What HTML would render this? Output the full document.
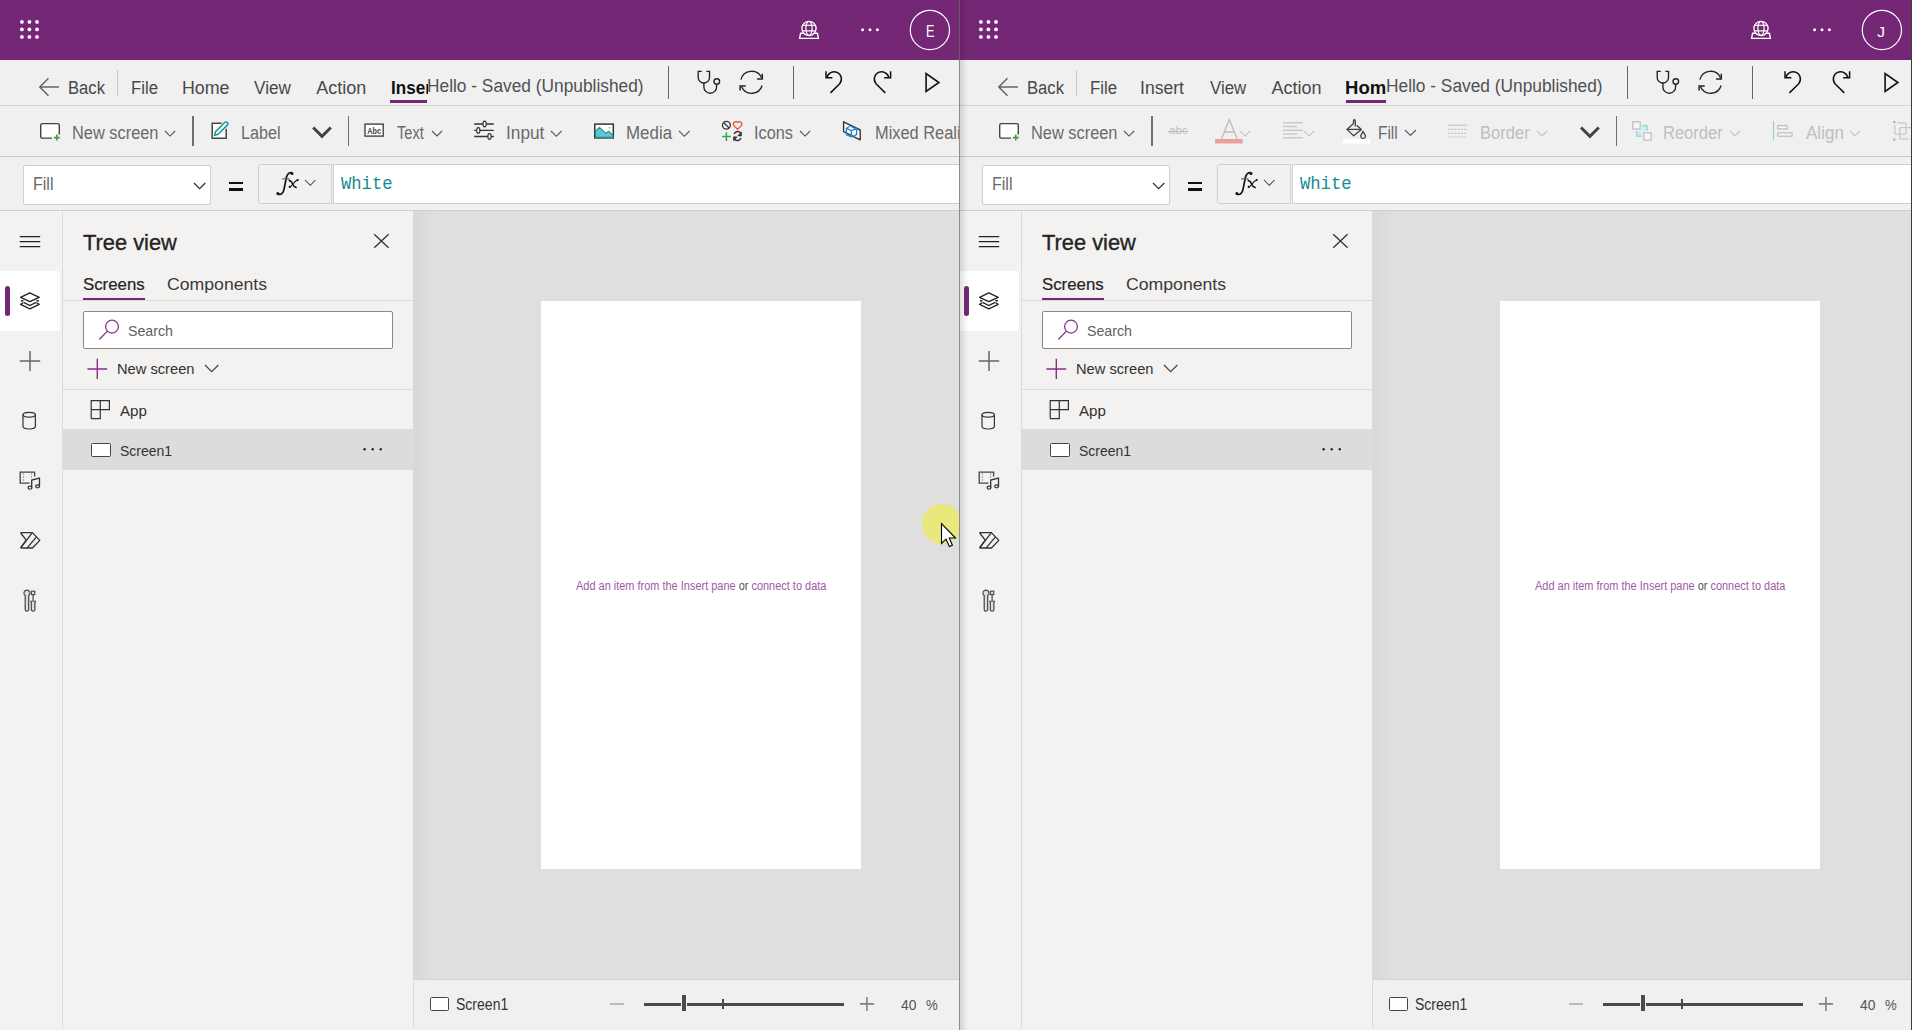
<!DOCTYPE html><html><head><meta charset="utf-8"><style>html,body{margin:0;padding:0;width:1912px;height:1030px;overflow:hidden;background:#f0f0f0}.a{position:absolute;display:block}.t{position:absolute;white-space:nowrap;line-height:1}.w{position:absolute;left:0;top:0;width:1912px;height:1030px;overflow:hidden}</style></head><body><div class="w" style="clip-path:inset(0 953px 0 0)"><div class="a" style="left:0px;top:0px;width:960px;height:60px;background:#742774"></div><svg class="a" style="left:14px;top:14px;" width="30" height="30" viewBox="14 14 30 30"><circle cx="21.9" cy="21.9" r="1.9" fill="#fff"/><circle cx="21.9" cy="29.4" r="1.9" fill="#fff"/><circle cx="21.9" cy="36.9" r="1.9" fill="#fff"/><circle cx="29.4" cy="21.9" r="1.9" fill="#fff"/><circle cx="29.4" cy="29.4" r="1.9" fill="#fff"/><circle cx="29.4" cy="36.9" r="1.9" fill="#fff"/><circle cx="37" cy="21.9" r="1.9" fill="#fff"/><circle cx="37" cy="29.4" r="1.9" fill="#fff"/><circle cx="37" cy="36.9" r="1.9" fill="#fff"/></svg><svg class="a" style="left:796px;top:18px;" width="26" height="24" viewBox="796 18 26 24"><path d="M800.6 33.2 L817.4 33.2 L818.4 38.4 L799.6 38.4 Z" fill="none" stroke="#fff" stroke-width="1.4" stroke-linejoin="round"/><circle cx="809" cy="28.4" r="7.1" fill="#742774" stroke="#fff" stroke-width="1.3"/><ellipse cx="809" cy="28.4" rx="3.1" ry="7.1" fill="none" stroke="#fff" stroke-width="1.2"/><line x1="802.4" y1="25.3" x2="815.6" y2="25.3" stroke="#fff" stroke-width="1.2"/><line x1="802.2" y1="30.9" x2="815.8" y2="30.9" stroke="#fff" stroke-width="1.2"/></svg><svg class="a" style="left:856px;top:24px;" width="28" height="12" viewBox="856 24 28 12"><circle cx="862.6" cy="29.8" r="1.5" fill="#fff"/><circle cx="870" cy="29.8" r="1.5" fill="#fff"/><circle cx="877.4" cy="29.8" r="1.5" fill="#fff"/></svg><svg class="a" style="left:906px;top:6px;" width="48" height="48" viewBox="906 6 48 48"><circle cx="929.9" cy="30" r="19.6" fill="none" stroke="#fff" stroke-width="1.2"/></svg><div class="t" style="left:925.98px;top:23.92px;font-family:'Liberation Sans', sans-serif;font-size:16px;font-weight:400;color:#fff;transform:scaleX(0.7955);transform-origin:0 0;">E</div><div class="a" style="left:0px;top:60px;width:960px;height:45px;background:#f0f0f0"></div><div class="a" style="left:0px;top:105px;width:960px;height:1px;background:#d4d4d4"></div><svg class="a" style="left:36px;top:75px;" width="26" height="24" viewBox="36 75 26 24"><path d="M59 87 H40 M48.5 78.3 L39.8 87 L48.5 95.7" fill="none" stroke="#666" stroke-width="1.5"/></svg><div class="t" style="left:68.17px;top:78.59px;font-family:'Liberation Sans', sans-serif;font-size:18px;font-weight:400;color:#484848;transform:scaleX(0.9242);transform-origin:0 0;">Back</div><div class="a" style="left:117px;top:70px;width:1px;height:26px;background:#c8c8c8"></div><div class="t" style="left:130.65px;top:78.59px;font-family:'Liberation Sans', sans-serif;font-size:18px;font-weight:400;color:#484848;transform:scaleX(0.9359);transform-origin:0 0;">File</div><div class="t" style="left:181.58px;top:78.59px;font-family:'Liberation Sans', sans-serif;font-size:18px;font-weight:400;color:#484848;transform:scaleX(0.9886);transform-origin:0 0;">Home</div><div class="t" style="left:253.83px;top:78.59px;font-family:'Liberation Sans', sans-serif;font-size:18px;font-weight:400;color:#484848;transform:scaleX(0.9528);transform-origin:0 0;">View</div><div class="t" style="left:316.30px;top:78.59px;font-family:'Liberation Sans', sans-serif;font-size:18px;font-weight:400;color:#484848;">Action</div><div class="a" style="left:390px;top:70px;width:37.6px;height:30px;overflow:hidden"><div class="t" style="left:0.70px;top:8.79px;font-family:'Liberation Sans', sans-serif;font-size:18px;font-weight:700;color:#111;transform:scaleX(0.9500);transform-origin:0 0;">Insert</div></div><div class="a" style="left:390px;top:100px;width:37px;height:3px;background:#742774"></div><div class="t" style="left:426.81px;top:76.89px;font-family:'Liberation Sans', sans-serif;font-size:18px;font-weight:400;color:#505050;transform:scaleX(0.9623);transform-origin:0 0;">Hello - Saved (Unpublished)</div><div class="a" style="left:668px;top:66px;width:1px;height:33px;background:#666"></div><div class="a" style="left:793px;top:66px;width:1px;height:33px;background:#666"></div><svg class="a" style="left:694px;top:68px;" width="28" height="28" viewBox="694 68 28 28"><path d="M701.8 71.4 H698.2 V77.4 A5.65 5.65 0 0 0 709.5 77.4 V71.4 H706.4" fill="none" stroke="#222" stroke-width="1.35"/><path d="M703.9 83 V86.9 A6.35 6.35 0 0 0 716.6 86.9 V84.4" fill="none" stroke="#222" stroke-width="1.35"/><circle cx="716.8" cy="81.5" r="2.8" fill="none" stroke="#222" stroke-width="1.35"/></svg><svg class="a" style="left:736px;top:68px;" width="30" height="28" viewBox="736 68 30 28"><path d="M740.93 79.64 A11 11 0 0 1 761.57 77.65" fill="none" stroke="#222" stroke-width="1.35"/><path d="M762.3 73.8 V79.1 H757.1" fill="none" stroke="#222" stroke-width="1.5"/><path d="M762.12 85.52 A11 11 0 0 1 741.55 86.77" fill="none" stroke="#222" stroke-width="1.35"/><path d="M740.1 90.6 V85.9 H745.7" fill="none" stroke="#222" stroke-width="1.5"/></svg><svg class="a" style="left:822px;top:68px;" width="24" height="28" viewBox="822 68 24 28"><path d="M826 71.2 V77.8 H832.4" fill="none" stroke="#111" stroke-width="1.5"/><path d="M826.9 77.7 A7.3 7.3 0 1 1 839.7 83.7 L830.4 92.9" fill="none" stroke="#111" stroke-width="1.5"/></svg><svg class="a" style="left:870px;top:68px;" width="24" height="28" viewBox="870 68 24 28"><path d="M890.6 71.2 V77.8 H884.2" fill="none" stroke="#111" stroke-width="1.5"/><path d="M888.8 77.7 A7.3 7.3 0 1 0 876 83.7 L885.3 92.9" fill="none" stroke="#111" stroke-width="1.5"/></svg><svg class="a" style="left:922px;top:70px;" width="22" height="26" viewBox="922 70 22 26"><path d="M926.1 73.6 V91.4 L938.9 82.5 Z" fill="none" stroke="#111" stroke-width="1.6" stroke-linejoin="miter"/></svg><div class="a" style="left:0px;top:106px;width:960px;height:50px;background:#f0f0f0"></div><div class="a" style="left:0px;top:156px;width:960px;height:1px;background:#c8c8c8"></div><svg class="a" style="left:38px;top:120px;" width="24" height="22" viewBox="38 120 24 22"><path d="M52 138.1 H42.2 A1.6 1.6 0 0 1 40.7 136.6 V125.1 A1.6 1.6 0 0 1 42.2 123.6 H57.8 A1.6 1.6 0 0 1 59.3 125.1 V134.5" fill="#fff" stroke="#444" stroke-width="1.4"/><path d="M56.8 134.6 V140.6 M53.8 137.6 H59.8" stroke="#3aa04a" stroke-width="1.6"/></svg><div class="t" style="left:71.89px;top:123.89px;font-family:'Liberation Sans', sans-serif;font-size:18px;font-weight:400;color:#6a6a6a;transform:scaleX(0.9097);transform-origin:0 0;">New screen</div><svg class="a" style="left:162.08499999999998px;top:127.66749999999999px;" width="16.130000000000024" height="11.065000000000012" viewBox="162.08499999999998 127.66749999999999 16.130000000000024 11.065000000000012"><path d="M165.08 130.67 L170.15 135.73 L175.22 130.67" fill="none" stroke="#555" stroke-width="1.1"/></svg><div class="a" style="left:192px;top:116px;width:2px;height:30px;background:#6e6e6e"></div><svg class="a" style="left:208px;top:118px;" width="24" height="24" viewBox="208 118 24 24"><path d="M221.6 123.2 H212.2 V138.2 H226.2 V128.8" fill="#fff" stroke="#444" stroke-width="1.5"/><path d="M214.5 135.4 L215.6 131.6 L224.9 122.3 A1.4 1.4 0 0 1 226.9 122.3 L227.5 122.9 A1.4 1.4 0 0 1 227.5 124.9 L218.2 134.2 Z" fill="#fff" stroke="#119a96" stroke-width="1.5" stroke-linejoin="round"/></svg><div class="t" style="left:240.91px;top:123.89px;font-family:'Liberation Sans', sans-serif;font-size:18px;font-weight:400;color:#6a6a6a;transform:scaleX(0.8986);transform-origin:0 0;">Label</div><svg class="a" style="left:308px;top:122px;" width="28" height="20" viewBox="308 122 28 20"><path d="M313.2 127.5 L322 136.3 L330.8 127.5" fill="none" stroke="#444" stroke-width="3"/></svg><div class="a" style="left:348px;top:116px;width:1px;height:30px;background:#707070"></div><svg class="a" style="left:362px;top:120px;" width="24" height="20" viewBox="362 120 24 20"><rect x="365" y="124.1" width="18.2" height="12" fill="#fff" stroke="#444" stroke-width="1.4"/><text x="367.2" y="133.9" font-family="Liberation Sans" font-weight="700" font-size="8.6" fill="#444" textLength="13.8" lengthAdjust="spacingAndGlyphs">Abc</text></svg><div class="t" style="left:396.91px;top:123.89px;font-family:'Liberation Sans', sans-serif;font-size:18px;font-weight:400;color:#6a6a6a;transform:scaleX(0.8103);transform-origin:0 0;">Text</div><svg class="a" style="left:428.585px;top:127.6925px;" width="16.03000000000003" height="11.015000000000015" viewBox="428.585 127.6925 16.03000000000003 11.015000000000015"><path d="M431.58 130.69 L436.60 135.71 L441.62 130.69" fill="none" stroke="#555" stroke-width="1.1"/></svg><svg class="a" style="left:472px;top:118px;" width="24" height="24" viewBox="472 118 24 24"><path d="M474.2 124 H493.8 M474.2 130.4 H493.8 M474.2 136.5 H493.8" stroke="#333" stroke-width="1.3"/><ellipse cx="484.6" cy="124" rx="1.6" ry="2.8" fill="#fff" stroke="#333" stroke-width="1.2"/><ellipse cx="478.3" cy="130.4" rx="1.6" ry="2.8" fill="#fff" stroke="#333" stroke-width="1.2"/><ellipse cx="489.5" cy="136.5" rx="1.6" ry="2.8" fill="#fff" stroke="#333" stroke-width="1.2"/></svg><div class="t" style="left:505.75px;top:123.89px;font-family:'Liberation Sans', sans-serif;font-size:18px;font-weight:400;color:#6a6a6a;transform:scaleX(0.9598);transform-origin:0 0;">Input</div><svg class="a" style="left:548.185px;top:127.54249999999996px;" width="16.63000000000011" height="11.315000000000055" viewBox="548.185 127.54249999999996 16.63000000000011 11.315000000000055"><path d="M551.18 130.54 L556.50 135.86 L561.82 130.54" fill="none" stroke="#555" stroke-width="1.1"/></svg><svg class="a" style="left:592px;top:120px;" width="24" height="22" viewBox="592 120 24 22"><rect x="594.8" y="124.1" width="18.5" height="13.8" fill="#fff" stroke="#333" stroke-width="1.5"/><path d="M595.5 131.2 L599.5 127.4 L605.9 133.3 L608.5 131.1 L613 135.5 V137.2 H595.5 Z" fill="#67c2d4" stroke="#13998a" stroke-width="1.1" stroke-linejoin="round"/><circle cx="609.5" cy="127.7" r="0.9" fill="#f4a83a"/></svg><div class="t" style="left:625.65px;top:123.89px;font-family:'Liberation Sans', sans-serif;font-size:18px;font-weight:400;color:#6a6a6a;transform:scaleX(0.9392);transform-origin:0 0;">Media</div><svg class="a" style="left:676.185px;top:127.54249999999996px;" width="16.63000000000011" height="11.315000000000055" viewBox="676.185 127.54249999999996 16.63000000000011 11.315000000000055"><path d="M679.18 130.54 L684.50 135.86 L689.82 130.54" fill="none" stroke="#555" stroke-width="1.1"/></svg><svg class="a" style="left:718px;top:118px;" width="28" height="26" viewBox="718 118 28 26"><circle cx="726.4" cy="125.3" r="3.9" fill="none" stroke="#333" stroke-width="1.3"/><path d="M723.8 122.7 L729 127.9" stroke="#333" stroke-width="1.3"/><path d="M737.6 129.4 L734 125.6 A2.1 2.1 0 0 1 737.6 122.6 A2.1 2.1 0 0 1 741.2 125.6 Z" fill="none" stroke="#f0502a" stroke-width="1.3" stroke-linejoin="round"/><path d="M726.4 132.2 V140.9 M722.1 136.5 H730.8" stroke="#2ea84a" stroke-width="1.5"/><path d="M734.2 134 A3.6 3.6 0 0 1 740.6 133" fill="none" stroke="#333" stroke-width="1.4"/><path d="M741.2 132 V135.6 H737.8" fill="#333" stroke="#333" stroke-width="1.2"/><path d="M741 138 A3.6 3.6 0 0 1 734.6 139" fill="none" stroke="#333" stroke-width="1.4"/><path d="M733.8 140.8 V137 H737.2" fill="#333" stroke="#333" stroke-width="1.2"/></svg><div class="t" style="left:754.03px;top:123.89px;font-family:'Liberation Sans', sans-serif;font-size:18px;font-weight:400;color:#6a6a6a;transform:scaleX(0.9046);transform-origin:0 0;">Icons</div><svg class="a" style="left:797.185px;top:127.66749999999996px;" width="16.13000000000011" height="11.065000000000055" viewBox="797.185 127.66749999999996 16.13000000000011 11.065000000000055"><path d="M800.18 130.67 L805.25 135.73 L810.32 130.67" fill="none" stroke="#555" stroke-width="1.1"/></svg><svg class="a" style="left:840px;top:118px;" width="24" height="25" viewBox="840 118 24 25"><path d="M843.6 121.8 V131.6 L860.2 139.8 V130 Z" fill="#fff" stroke="#333" stroke-width="1.4" stroke-linejoin="round"/><path d="M850.4 126 L846.4 128.2 V134.6 L851.4 137 L856.6 134.6 V128.8 L851.4 126.6 M846.6 128.4 L851.4 130.6 V137 M851.4 130.6 L856.4 128.6" fill="none" stroke="#1a86d8" stroke-width="1.3" stroke-linejoin="round"/></svg><div class="t" style="left:874.69px;top:123.89px;font-family:'Liberation Sans', sans-serif;font-size:18px;font-weight:400;color:#6a6a6a;transform:scaleX(0.9097);transform-origin:0 0;">Mixed Reality</div><div class="a" style="left:0px;top:157px;width:960px;height:53px;background:#f0f0f0"></div><div class="a" style="left:0px;top:210px;width:960px;height:1px;background:#cfcfcf"></div><div class="a" style="left:23px;top:165px;width:188px;height:40px;box-sizing:border-box;background:#fff;border:1px solid #cfcfcf;border-radius:2px"></div><div class="t" style="left:32.72px;top:175.48px;font-family:'Liberation Sans', sans-serif;font-size:18px;font-weight:400;color:#6a6a6a;transform:scaleX(0.8918);transform-origin:0 0;">Fill</div><svg class="a" style="left:191.055px;top:179.57750000000001px;" width="17.289999999999992" height="11.644999999999996" viewBox="191.055 179.57750000000001 17.289999999999992 11.644999999999996"><path d="M194.06 182.58 L199.70 188.22 L205.34 182.58" fill="none" stroke="#333" stroke-width="1.3"/></svg><div class="a" style="left:228.6px;top:182px;width:14px;height:2.4px;background:#111"></div><div class="a" style="left:228.6px;top:188.2px;width:14px;height:2.4px;background:#111"></div><div class="a" style="left:257.6px;top:164.3px;width:74px;height:39.8px;box-sizing:border-box;background:#f1f1f1;border:1px solid #d0d0d0;border-radius:3px 0 0 3px"></div><svg class="a" style="left:274px;top:168px;" width="28" height="30" viewBox="274 168 28 30"><path d="M291.6 172.7 C288.4 172.3 286.9 174.8 286.1 178.8 L284 189.4 C283.2 193.1 281 194.9 278.2 194.4" fill="none" stroke="#111" stroke-width="1.7"/><circle cx="292" cy="173.4" r="1.5" fill="#111"/><circle cx="277.9" cy="193.6" r="1.5" fill="#111"/><path d="M282.2 178.9 H289.6" stroke="#555" stroke-width="1.1"/><path d="M288.6 180.6 C290.8 180.4 291.8 182 292.8 184.2 C293.8 186.4 294.8 187.8 296.8 187.5" fill="none" stroke="#111" stroke-width="1.5"/><path d="M298.3 179.8 C296 180.4 294.2 182.2 292.8 184.2 C291.6 186 290.6 187.3 289.2 187.2" fill="none" stroke="#111" stroke-width="1.1"/><circle cx="297.6" cy="180.1" r="1.05" fill="#111"/><circle cx="289.7" cy="186.9" r="1.05" fill="#111"/></svg><svg class="a" style="left:301.6675px;top:177.05874999999997px;" width="16.564999999999998" height="11.282499999999999" viewBox="301.6675 177.05874999999997 16.564999999999998 11.282499999999999"><path d="M304.67 180.06 L309.95 185.34 L315.23 180.06" fill="none" stroke="#444" stroke-width="1.05"/></svg><div class="a" style="left:332.6px;top:164.3px;width:640px;height:39.4px;box-sizing:border-box;background:#fff;border:1px solid #cfcfcf;border-right:none"></div><div class="t" style="left:341.00px;top:174.60px;font-family:'Liberation Mono', monospace;font-size:19px;font-weight:400;color:#128c91;transform:scaleX(0.9040);transform-origin:0 0;">White</div><div class="a" style="left:0px;top:211px;width:62px;height:819px;background:#f3f2f1"></div><div class="a" style="left:62px;top:211px;width:1px;height:819px;background:#dcdcdc"></div><svg class="a" style="left:16px;top:230px;" width="28" height="22" viewBox="16 230 28 22"><path d="M19.8 236.6 H40.2 M19.8 241.6 H40.2 M19.8 246.6 H40.2" stroke="#222" stroke-width="1.2"/></svg><div class="a" style="left:0px;top:270.6px;width:60px;height:60px;background:#fff;border-radius:0 3px 3px 0"></div><div class="a" style="left:4.9px;top:285.7px;width:5px;height:30.3px;background:#742774;border-radius:2.5px"></div><svg class="a" style="left:18px;top:289px;" width="24" height="24" viewBox="18 289 24 24"><path d="M29.8 292.8 L39.2 297.4 L29.8 301.7 L20.6 297.4 Z" fill="#fff" stroke="#222" stroke-width="1.3" stroke-linejoin="round"/><path d="M20.9 300.8 H23.4 M36.4 300.8 H38.9" stroke="#222" stroke-width="1.4"/><path d="M23.6 302.3 L29.8 305.5 L36.2 302.3" fill="none" stroke="#222" stroke-width="1.3"/><path d="M23.2 302.8 L20.6 304.4 L29.8 308.8 L39.2 304.4 L36.6 302.8" fill="none" stroke="#222" stroke-width="1.3" stroke-linejoin="round"/></svg><svg class="a" style="left:16px;top:348px;" width="28" height="26" viewBox="16 348 28 26"><path d="M30 350.9 V371 M19.8 361 H40.2" stroke="#666" stroke-width="1.5"/></svg><svg class="a" style="left:20px;top:410px;" width="20" height="22" viewBox="20 410 20 22"><ellipse cx="29.2" cy="414.8" rx="6.2" ry="2.4" fill="none" stroke="#333" stroke-width="1.2"/><path d="M23 414.8 V426.6 A6.2 2.4 0 0 0 35.4 426.6 V414.8" fill="none" stroke="#333" stroke-width="1.2"/></svg><svg class="a" style="left:17px;top:468px;" width="26" height="24" viewBox="17 468 26 24"><path d="M34.6 476.6 V472.2 H20.2 V483.2 H29.6" fill="none" stroke="#444" stroke-width="1.3"/><path d="M23.3 473.5 V474.6 M23.3 476.4 V477.6 M23.3 479.4 V480.6 M31.6 473.5 V474.6 M31.6 476.4 V477.6" stroke="#666" stroke-width="1"/><path d="M31.7 487.6 V480.1 L39.5 478.1 V486.3" fill="none" stroke="#333" stroke-width="1.3"/><ellipse cx="30" cy="487.7" rx="1.9" ry="1.5" fill="none" stroke="#333" stroke-width="1.3"/><ellipse cx="37.6" cy="486.3" rx="1.9" ry="1.5" fill="none" stroke="#333" stroke-width="1.3"/></svg><svg class="a" style="left:17px;top:529px;" width="26" height="22" viewBox="17 529 26 22"><path d="M20.8 533 L21 532.6 H32.4 L39.8 540.4 L32.4 548 H21 L20.8 547.6 L26.2 540.2 Z" fill="none" stroke="#333" stroke-width="1.3" stroke-linejoin="round"/><path d="M32.2 532.9 L20.9 547.5 M36.3 537.2 L27.2 547.9" stroke="#333" stroke-width="1.3"/></svg><svg class="a" style="left:20px;top:588px;" width="20" height="26" viewBox="20 588 20 26"><path d="M25.2 595.6 A3 3 0 1 1 28.7 595.6 V609.4 A1.75 1.75 0 0 1 25.2 609.4 Z" fill="#ddd" stroke="#444" stroke-width="1.2"/><rect x="31.4" y="591.2" width="3.4" height="3.4" fill="#ddd" stroke="#444" stroke-width="1.1"/><path d="M33.1 594.6 V601.4 M30.2 601.4 H36" stroke="#444" stroke-width="1.2"/><path d="M31.3 601.6 V609.4 A1.8 1.8 0 0 0 34.9 609.4 V601.6" fill="#ddd" stroke="#444" stroke-width="1.2"/></svg><div class="a" style="left:63px;top:211px;width:350px;height:819px;background:#f3f2f1"></div><div class="t" style="left:83.26px;top:231.66px;font-family:'Liberation Sans', sans-serif;font-size:22.5px;font-weight:400;color:#252423;transform:scaleX(0.9709);transform-origin:0 0;-webkit-text-stroke:0.35px #252423;">Tree view</div><svg class="a" style="left:370px;top:230px;" width="22" height="22" viewBox="370 230 22 22"><path d="M374.2 234.3 L388.6 247.7 M388.6 234.3 L374.2 247.7" stroke="#333" stroke-width="1.3"/></svg><div class="t" style="left:82.86px;top:276.40px;font-family:'Liberation Sans', sans-serif;font-size:17px;font-weight:400;color:#252423;transform:scaleX(0.9892);transform-origin:0 0;-webkit-text-stroke:0.2px #252423;">Screens</div><div class="t" style="left:166.92px;top:276.40px;font-family:'Liberation Sans', sans-serif;font-size:17px;font-weight:400;color:#3b3a39;transform:scaleX(1.0384);transform-origin:0 0;">Components</div><div class="a" style="left:83px;top:297.6px;width:62px;height:2.6px;background:#742774"></div><div class="a" style="left:63px;top:300px;width:350px;height:1px;background:#d8d8d8"></div><div class="a" style="left:83px;top:310.8px;width:310px;height:38px;box-sizing:border-box;background:#fff;border:1px solid #8a8886;border-radius:2px"></div><svg class="a" style="left:96px;top:318px;" width="26" height="24" viewBox="96 318 26 24"><circle cx="112" cy="326.6" r="6.4" fill="none" stroke="#8a2d8a" stroke-width="1.25"/><path d="M107.4 331.1 L99.3 339.5" stroke="#8a2d8a" stroke-width="1.3"/></svg><div class="t" style="left:128.09px;top:323.24px;font-family:'Liberation Sans', sans-serif;font-size:15px;font-weight:400;color:#605e5c;transform:scaleX(0.9464);transform-origin:0 0;">Search</div><svg class="a" style="left:85px;top:356px;" width="24" height="26" viewBox="85 356 24 26"><path d="M97.3 358.8 V379 M87.4 369 H107.2" stroke="#8a2d8a" stroke-width="1.4"/></svg><div class="t" style="left:116.93px;top:361.28px;font-family:'Liberation Sans', sans-serif;font-size:15.5px;font-weight:400;color:#323130;transform:scaleX(0.9470);transform-origin:0 0;">New screen</div><svg class="a" style="left:201.82px;top:362.15999999999997px;" width="19.360000000000014" height="12.680000000000007" viewBox="201.82 362.15999999999997 19.360000000000014 12.680000000000007"><path d="M204.82 365.16 L211.50 371.84 L218.18 365.16" fill="none" stroke="#444" stroke-width="1.2"/></svg><div class="a" style="left:63px;top:389px;width:350px;height:1px;background:#dcdcdc"></div><svg class="a" style="left:88px;top:398px;" width="24" height="24" viewBox="88 398 24 24"><path d="M91.2 400.7 H109.4 V409.7 H91.2 Z M91.2 418.6 V400.7 M91.2 418.6 H100.3 V400.7" fill="none" stroke="#333" stroke-width="1.2"/></svg><div class="t" style="left:120.40px;top:402.98px;font-family:'Liberation Sans', sans-serif;font-size:15.5px;font-weight:400;color:#323130;transform:scaleX(0.9752);transform-origin:0 0;">App</div><div class="a" style="left:63px;top:429px;width:350px;height:40.5px;background:#dcdcdc"></div><div class="a" style="left:91px;top:442.6px;width:20px;height:14.4px;box-sizing:border-box;background:#fff;border:1.3px solid #444;border-radius:1.5px"></div><div class="t" style="left:119.70px;top:443.28px;font-family:'Liberation Sans', sans-serif;font-size:15.5px;font-weight:400;color:#323130;transform:scaleX(0.9029);transform-origin:0 0;">Screen1</div><svg class="a" style="left:360px;top:444px;" width="26" height="10" viewBox="360 444 26 10"><circle cx="364.6" cy="449.2" r="1.2" fill="#222"/><circle cx="372.7" cy="449.2" r="1.2" fill="#222"/><circle cx="380.8" cy="449.2" r="1.2" fill="#222"/></svg><div class="a" style="left:413px;top:211px;width:1px;height:819px;background:#dadada"></div><div class="a" style="left:414px;top:211px;width:545px;height:769px;background:#dfdfdf"></div><div class="a" style="left:414px;top:211px;width:20px;height:769px;background:linear-gradient(90deg,#d8d8d8,#dfdfdf)"></div><div class="a" style="left:541px;top:301px;width:320px;height:568px;background:#fff"></div><div class="t" style="left:575.80px;top:580.09px;font-family:'Liberation Sans', sans-serif;font-size:12px;font-weight:400;color:#8b2f8b;transform:scaleX(0.9132);transform-origin:0 0;"><span style="color:#a25aa2">Add an item from the Insert pane</span> <span style="color:#555">or</span> <span style="color:#a25aa2">connect to data</span></div><div class="a" style="left:414px;top:979px;width:545px;height:1px;background:#d4d4d4"></div><div class="a" style="left:414px;top:980px;width:545px;height:50px;background:#f0f0f0"></div><div class="a" style="left:429.8px;top:996.6px;width:19.6px;height:14.4px;box-sizing:border-box;background:#fff;border:1.3px solid #444;border-radius:1.5px"></div><div class="t" style="left:455.60px;top:997.02px;font-family:'Liberation Sans', sans-serif;font-size:16px;font-weight:400;color:#333;transform:scaleX(0.8764);transform-origin:0 0;">Screen1</div><div class="a" style="left:610px;top:1003px;width:14.4px;height:1.5px;background:#bbb"></div><div class="a" style="left:643.7px;top:1003px;width:200.4px;height:3px;background:#4a4a4a"></div><div class="a" style="left:682px;top:995px;width:4px;height:16px;background:#4a4a4a;box-shadow:0 0 0 1px #f4f4f4"></div><div class="a" style="left:722px;top:999px;width:1.6px;height:10px;background:#4a4a4a"></div><svg class="a" style="left:857px;top:994px;" width="20" height="20" viewBox="857 994 20 20"><path d="M866.9 997 V1011 M859.9 1003.9 H874.1" stroke="#808080" stroke-width="1.6"/></svg><div class="t" style="left:901.22px;top:997.18px;font-family:'Liberation Sans', sans-serif;font-size:15.5px;font-weight:400;color:#555;transform:scaleX(0.8886);transform-origin:0 0;">40</div><div class="t" style="left:926.00px;top:997.18px;font-family:'Liberation Sans', sans-serif;font-size:15.5px;font-weight:400;color:#555;transform:scaleX(0.8497);transform-origin:0 0;">%</div><div class="a" style="left:921.5px;top:503.5px;width:40px;height:40px;border-radius:50%;background:rgba(232,232,124,1)"></div><div class="a" style="left:0px;top:1028px;width:960px;height:2px;background:#f0f0f0"></div></div><div class="w" style="clip-path:inset(0 1px 0 960px)"><div class="a" style="left:959px;top:0px;width:960px;height:60px;background:#742774"></div><svg class="a" style="left:973px;top:14px;" width="30" height="30" viewBox="14 14 30 30"><circle cx="21.9" cy="21.9" r="1.9" fill="#fff"/><circle cx="21.9" cy="29.4" r="1.9" fill="#fff"/><circle cx="21.9" cy="36.9" r="1.9" fill="#fff"/><circle cx="29.4" cy="21.9" r="1.9" fill="#fff"/><circle cx="29.4" cy="29.4" r="1.9" fill="#fff"/><circle cx="29.4" cy="36.9" r="1.9" fill="#fff"/><circle cx="37" cy="21.9" r="1.9" fill="#fff"/><circle cx="37" cy="29.4" r="1.9" fill="#fff"/><circle cx="37" cy="36.9" r="1.9" fill="#fff"/></svg><svg class="a" style="left:1748px;top:18px;" width="26" height="24" viewBox="796 18 26 24"><path d="M800.6 33.2 L817.4 33.2 L818.4 38.4 L799.6 38.4 Z" fill="none" stroke="#fff" stroke-width="1.4" stroke-linejoin="round"/><circle cx="809" cy="28.4" r="7.1" fill="#742774" stroke="#fff" stroke-width="1.3"/><ellipse cx="809" cy="28.4" rx="3.1" ry="7.1" fill="none" stroke="#fff" stroke-width="1.2"/><line x1="802.4" y1="25.3" x2="815.6" y2="25.3" stroke="#fff" stroke-width="1.2"/><line x1="802.2" y1="30.9" x2="815.8" y2="30.9" stroke="#fff" stroke-width="1.2"/></svg><svg class="a" style="left:1808px;top:24px;" width="28" height="12" viewBox="856 24 28 12"><circle cx="862.6" cy="29.8" r="1.5" fill="#fff"/><circle cx="870" cy="29.8" r="1.5" fill="#fff"/><circle cx="877.4" cy="29.8" r="1.5" fill="#fff"/></svg><svg class="a" style="left:1858px;top:6px;" width="48" height="48" viewBox="906 6 48 48"><circle cx="929.9" cy="30" r="19.6" fill="none" stroke="#fff" stroke-width="1.2"/></svg><div class="t" style="left:1877.19px;top:24.18px;font-family:'Liberation Sans', sans-serif;font-size:15.5px;font-weight:400;color:#fff;">J</div><div class="a" style="left:959px;top:60px;width:960px;height:45px;background:#f0f0f0"></div><div class="a" style="left:959px;top:105px;width:960px;height:1px;background:#d4d4d4"></div><svg class="a" style="left:995px;top:75px;" width="26" height="24" viewBox="36 75 26 24"><path d="M59 87 H40 M48.5 78.3 L39.8 87 L48.5 95.7" fill="none" stroke="#666" stroke-width="1.5"/></svg><div class="t" style="left:1027.17px;top:78.59px;font-family:'Liberation Sans', sans-serif;font-size:18px;font-weight:400;color:#484848;transform:scaleX(0.9242);transform-origin:0 0;">Back</div><div class="a" style="left:1076px;top:70px;width:1px;height:26px;background:#c8c8c8"></div><div class="t" style="left:1089.65px;top:78.59px;font-family:'Liberation Sans', sans-serif;font-size:18px;font-weight:400;color:#484848;transform:scaleX(0.9359);transform-origin:0 0;">File</div><div class="t" style="left:1140.22px;top:78.59px;font-family:'Liberation Sans', sans-serif;font-size:18px;font-weight:400;color:#484848;transform:scaleX(0.9769);transform-origin:0 0;">Insert</div><div class="t" style="left:1209.53px;top:78.59px;font-family:'Liberation Sans', sans-serif;font-size:18px;font-weight:400;color:#484848;transform:scaleX(0.9372);transform-origin:0 0;">View</div><div class="t" style="left:1271.60px;top:78.59px;font-family:'Liberation Sans', sans-serif;font-size:18px;font-weight:400;color:#484848;">Action</div><div class="a" style="left:1346px;top:70px;width:40px;height:30px;overflow:hidden"><div class="t" style="left:-0.90px;top:8.79px;font-family:'Liberation Sans', sans-serif;font-size:18px;font-weight:700;color:#111;transform:scaleX(1.0300);transform-origin:0 0;">Home</div></div><div class="a" style="left:1346px;top:100px;width:40px;height:3px;background:#742774"></div><div class="t" style="left:1385.81px;top:76.89px;font-family:'Liberation Sans', sans-serif;font-size:18px;font-weight:400;color:#505050;transform:scaleX(0.9623);transform-origin:0 0;">Hello - Saved (Unpublished)</div><div class="a" style="left:1627px;top:66px;width:1px;height:33px;background:#666"></div><div class="a" style="left:1752px;top:66px;width:1px;height:33px;background:#666"></div><svg class="a" style="left:1653px;top:68px;" width="28" height="28" viewBox="694 68 28 28"><path d="M701.8 71.4 H698.2 V77.4 A5.65 5.65 0 0 0 709.5 77.4 V71.4 H706.4" fill="none" stroke="#222" stroke-width="1.35"/><path d="M703.9 83 V86.9 A6.35 6.35 0 0 0 716.6 86.9 V84.4" fill="none" stroke="#222" stroke-width="1.35"/><circle cx="716.8" cy="81.5" r="2.8" fill="none" stroke="#222" stroke-width="1.35"/></svg><svg class="a" style="left:1695px;top:68px;" width="30" height="28" viewBox="736 68 30 28"><path d="M740.93 79.64 A11 11 0 0 1 761.57 77.65" fill="none" stroke="#222" stroke-width="1.35"/><path d="M762.3 73.8 V79.1 H757.1" fill="none" stroke="#222" stroke-width="1.5"/><path d="M762.12 85.52 A11 11 0 0 1 741.55 86.77" fill="none" stroke="#222" stroke-width="1.35"/><path d="M740.1 90.6 V85.9 H745.7" fill="none" stroke="#222" stroke-width="1.5"/></svg><svg class="a" style="left:1781px;top:68px;" width="24" height="28" viewBox="822 68 24 28"><path d="M826 71.2 V77.8 H832.4" fill="none" stroke="#111" stroke-width="1.5"/><path d="M826.9 77.7 A7.3 7.3 0 1 1 839.7 83.7 L830.4 92.9" fill="none" stroke="#111" stroke-width="1.5"/></svg><svg class="a" style="left:1829px;top:68px;" width="24" height="28" viewBox="870 68 24 28"><path d="M890.6 71.2 V77.8 H884.2" fill="none" stroke="#111" stroke-width="1.5"/><path d="M888.8 77.7 A7.3 7.3 0 1 0 876 83.7 L885.3 92.9" fill="none" stroke="#111" stroke-width="1.5"/></svg><svg class="a" style="left:1881px;top:70px;" width="22" height="26" viewBox="922 70 22 26"><path d="M926.1 73.6 V91.4 L938.9 82.5 Z" fill="none" stroke="#111" stroke-width="1.6" stroke-linejoin="miter"/></svg><div class="a" style="left:959px;top:106px;width:960px;height:50px;background:#f0f0f0"></div><div class="a" style="left:959px;top:156px;width:960px;height:1px;background:#c8c8c8"></div><svg class="a" style="left:997px;top:120px;" width="24" height="22" viewBox="38 120 24 22"><path d="M52 138.1 H42.2 A1.6 1.6 0 0 1 40.7 136.6 V125.1 A1.6 1.6 0 0 1 42.2 123.6 H57.8 A1.6 1.6 0 0 1 59.3 125.1 V134.5" fill="#fff" stroke="#444" stroke-width="1.4"/><path d="M56.8 134.6 V140.6 M53.8 137.6 H59.8" stroke="#3aa04a" stroke-width="1.6"/></svg><div class="t" style="left:1030.89px;top:123.89px;font-family:'Liberation Sans', sans-serif;font-size:18px;font-weight:400;color:#6a6a6a;transform:scaleX(0.9097);transform-origin:0 0;">New screen</div><svg class="a" style="left:1121.085px;top:127.66749999999999px;" width="16.130000000000024" height="11.065000000000012" viewBox="162.08499999999998 127.66749999999999 16.130000000000024 11.065000000000012"><path d="M165.08 130.67 L170.15 135.73 L175.22 130.67" fill="none" stroke="#555" stroke-width="1.1"/></svg><div class="a" style="left:1151px;top:116px;width:2px;height:30px;background:#6e6e6e"></div><div class="t" style="left:1168.53px;top:125.05px;font-family:'Liberation Sans', sans-serif;font-size:11.5px;font-weight:400;color:#c0c0c0;transform:scaleX(1.0164);transform-origin:0 0;">abc</div><div class="a" style="left:1168px;top:131px;width:20px;height:1.2px;background:#c0c0c0"></div><svg class="a" style="left:1212px;top:116px;" width="34" height="30" viewBox="1212 116 34 30"><path d="M1221.5 139 L1229.3 119.4 L1237.1 139 M1224.3 132 H1234.3" fill="none" stroke="#bdbdbd" stroke-width="1.3"/><rect x="1215.1" y="139" width="27.6" height="4.5" fill="#e8a0a0"/></svg><svg class="a" style="left:1236.785px;top:127.66750000000002px;" width="16.12999999999988" height="11.06499999999994" viewBox="1236.785 127.66750000000002 16.12999999999988 11.06499999999994"><path d="M1239.79 130.67 L1244.85 135.73 L1249.91 130.67" fill="none" stroke="#c4c4c4" stroke-width="1.1"/></svg><svg class="a" style="left:1280px;top:118px;" width="26" height="24" viewBox="1280 118 26 24"><path d="M1283 122.8 H1303" stroke="#c8c8c8" stroke-width="1.4"/><path d="M1283 126.5 H1297" stroke="#c8c8c8" stroke-width="1.4"/><path d="M1283 130.3 H1303" stroke="#c8c8c8" stroke-width="1.4"/><path d="M1283 134 H1297" stroke="#c8c8c8" stroke-width="1.4"/><path d="M1283 137.8 H1303" stroke="#c8c8c8" stroke-width="1.4"/></svg><svg class="a" style="left:1300.885px;top:127.66749999999996px;" width="16.13000000000011" height="11.065000000000055" viewBox="1300.885 127.66749999999996 16.13000000000011 11.065000000000055"><path d="M1303.88 130.67 L1308.95 135.73 L1314.02 130.67" fill="none" stroke="#c4c4c4" stroke-width="1.1"/></svg><svg class="a" style="left:1340px;top:116px;" width="32" height="30" viewBox="1340 116 32 30"><path d="M1355.3 126.6 V120.6 A0.9 0.9 0 0 0 1353.5 120.6 V123.4 L1346.9 129.4 L1353.6 135.8 L1361.4 129.4 L1356.6 125.2" fill="none" stroke="#444" stroke-width="1.3" stroke-linejoin="round"/><path d="M1346.9 129.4 H1361.4" stroke="#444" stroke-width="1.3"/><path d="M1363.1 131.4 L1360.8 135.6 A2.35 2.35 0 1 0 1365.4 135.6 Z" fill="none" stroke="#444" stroke-width="1.3" stroke-linejoin="round"/><rect x="1342.8" y="139" width="27.2" height="4.5" fill="#fff"/></svg><div class="t" style="left:1378.36px;top:123.89px;font-family:'Liberation Sans', sans-serif;font-size:18px;font-weight:400;color:#6a6a6a;transform:scaleX(0.8577);transform-origin:0 0;">Fill</div><svg class="a" style="left:1402.085px;top:127.46749999999997px;" width="16.930000000000064" height="11.465000000000032" viewBox="1402.085 127.46749999999997 16.930000000000064 11.465000000000032"><path d="M1405.09 130.47 L1410.55 135.93 L1416.02 130.47" fill="none" stroke="#555" stroke-width="1.1"/></svg><svg class="a" style="left:1446px;top:122px;" width="24" height="18" viewBox="1446 122 24 18"><path d="M1448.2 125.2 H1467.2" stroke="#c4c4c4" stroke-width="1.2"/><path d="M1448.2 129.3 H1467.2 M1448.2 133.3 H1467.2 M1448.2 137 H1467.2" stroke="#c4c4c4" stroke-width="1.2" stroke-dasharray="2 1.2"/></svg><div class="t" style="left:1479.87px;top:123.89px;font-family:'Liberation Sans', sans-serif;font-size:18px;font-weight:400;color:#bebebe;transform:scaleX(0.9202);transform-origin:0 0;">Border</div><svg class="a" style="left:1534.385px;top:127.6925px;" width="16.029999999999973" height="11.014999999999986" viewBox="1534.385 127.6925 16.029999999999973 11.014999999999986"><path d="M1537.38 130.69 L1542.40 135.71 L1547.41 130.69" fill="none" stroke="#c4c4c4" stroke-width="1.1"/></svg><svg class="a" style="left:1576px;top:122px;" width="28" height="20" viewBox="1576 122 28 20"><path d="M1581 127.5 L1589.9 136.3 L1598.8 127.5" fill="none" stroke="#444" stroke-width="3"/></svg><div class="a" style="left:1616px;top:116px;width:1px;height:30px;background:#707070"></div><svg class="a" style="left:1630px;top:119px;" width="24" height="24" viewBox="1630 119 24 24"><rect x="1632.8" y="121.7" width="7.4" height="7.4" fill="#f6f6f6" stroke="#c0c0c0" stroke-width="1.3"/><rect x="1643.8" y="132.8" width="7.4" height="7.4" fill="#f6f6f6" stroke="#c0c0c0" stroke-width="1.3"/><rect x="1642.1" y="125" width="5.6" height="5.8" fill="#c8eef2"/><path d="M1642.1 125.6 H1647.1 V130.8" fill="none" stroke="#9ccfd0" stroke-width="1.2"/><rect x="1636.1" y="131.1" width="5.6" height="5.6" fill="#c8eef2"/><path d="M1636.7 131.1 V136.1 H1641.7" fill="none" stroke="#9ccfd0" stroke-width="1.2"/></svg><div class="t" style="left:1663.48px;top:123.89px;font-family:'Liberation Sans', sans-serif;font-size:18px;font-weight:400;color:#bebebe;transform:scaleX(0.9170);transform-origin:0 0;">Reorder</div><svg class="a" style="left:1727.385px;top:127.6925px;" width="16.029999999999973" height="11.014999999999986" viewBox="1727.385 127.6925 16.029999999999973 11.014999999999986"><path d="M1730.38 130.69 L1735.40 135.71 L1740.41 130.69" fill="none" stroke="#c4c4c4" stroke-width="1.1"/></svg><svg class="a" style="left:1770px;top:118px;" width="26" height="25" viewBox="1770 118 26 25"><path d="M1773.5 121.1 V140.7" stroke="#a0d2d2" stroke-width="1.3"/><rect x="1777.8" y="125.6" width="9.3" height="3.3" fill="#f8f8f8" stroke="#c0c0c0" stroke-width="1.3"/><rect x="1777.8" y="132.9" width="14.3" height="3.3" fill="#f8f8f8" stroke="#c0c0c0" stroke-width="1.3"/></svg><div class="t" style="left:1806.00px;top:123.89px;font-family:'Liberation Sans', sans-serif;font-size:18px;font-weight:400;color:#bebebe;transform:scaleX(0.9465);transform-origin:0 0;">Align</div><svg class="a" style="left:1847.385px;top:127.7425px;" width="15.829999999999927" height="10.914999999999964" viewBox="1847.385 127.7425 15.829999999999927 10.914999999999964"><path d="M1850.38 130.74 L1855.30 135.66 L1860.21 130.74" fill="none" stroke="#c4c4c4" stroke-width="1.1"/></svg><svg class="a" style="left:1890px;top:118px;" width="22" height="25" viewBox="1890 118 22 25"><rect x="1893.2" y="121" width="2.2" height="2.2" fill="#b0b0b0"/><rect x="1893.2" y="138.6" width="2.2" height="2.2" fill="#b0b0b0"/><path d="M1897.2 122.8 H1905.2 A0.9 0.9 0 0 1 1906.1 123.7 V133.2 A0.9 0.9 0 0 1 1905.2 134.1 H1895.8 A0.9 0.9 0 0 1 1894.9 133.2 V125.4" fill="none" stroke="#c8c8c8" stroke-width="1.3"/><path d="M1911 127.6 H1900.7 A0.9 0.9 0 0 0 1899.8 128.5 V137.9 A0.9 0.9 0 0 0 1900.7 138.8 H1909.2" fill="none" stroke="#c8c8c8" stroke-width="1.3"/></svg><div class="a" style="left:959px;top:157px;width:960px;height:53px;background:#f0f0f0"></div><div class="a" style="left:959px;top:210px;width:960px;height:1px;background:#cfcfcf"></div><div class="a" style="left:982px;top:165px;width:188px;height:40px;box-sizing:border-box;background:#fff;border:1px solid #cfcfcf;border-radius:2px"></div><div class="t" style="left:991.72px;top:175.48px;font-family:'Liberation Sans', sans-serif;font-size:18px;font-weight:400;color:#6a6a6a;transform:scaleX(0.8918);transform-origin:0 0;">Fill</div><svg class="a" style="left:1150.055px;top:179.57750000000001px;" width="17.289999999999992" height="11.644999999999996" viewBox="191.055 179.57750000000001 17.289999999999992 11.644999999999996"><path d="M194.06 182.58 L199.70 188.22 L205.34 182.58" fill="none" stroke="#333" stroke-width="1.3"/></svg><div class="a" style="left:1187.6px;top:182px;width:14px;height:2.4px;background:#111"></div><div class="a" style="left:1187.6px;top:188.2px;width:14px;height:2.4px;background:#111"></div><div class="a" style="left:1216.6px;top:164.3px;width:74px;height:39.8px;box-sizing:border-box;background:#f1f1f1;border:1px solid #d0d0d0;border-radius:3px 0 0 3px"></div><svg class="a" style="left:1233px;top:168px;" width="28" height="30" viewBox="274 168 28 30"><path d="M291.6 172.7 C288.4 172.3 286.9 174.8 286.1 178.8 L284 189.4 C283.2 193.1 281 194.9 278.2 194.4" fill="none" stroke="#111" stroke-width="1.7"/><circle cx="292" cy="173.4" r="1.5" fill="#111"/><circle cx="277.9" cy="193.6" r="1.5" fill="#111"/><path d="M282.2 178.9 H289.6" stroke="#555" stroke-width="1.1"/><path d="M288.6 180.6 C290.8 180.4 291.8 182 292.8 184.2 C293.8 186.4 294.8 187.8 296.8 187.5" fill="none" stroke="#111" stroke-width="1.5"/><path d="M298.3 179.8 C296 180.4 294.2 182.2 292.8 184.2 C291.6 186 290.6 187.3 289.2 187.2" fill="none" stroke="#111" stroke-width="1.1"/><circle cx="297.6" cy="180.1" r="1.05" fill="#111"/><circle cx="289.7" cy="186.9" r="1.05" fill="#111"/></svg><svg class="a" style="left:1260.6675px;top:177.05874999999997px;" width="16.564999999999998" height="11.282499999999999" viewBox="301.6675 177.05874999999997 16.564999999999998 11.282499999999999"><path d="M304.67 180.06 L309.95 185.34 L315.23 180.06" fill="none" stroke="#444" stroke-width="1.05"/></svg><div class="a" style="left:1291.6px;top:164.3px;width:640px;height:39.4px;box-sizing:border-box;background:#fff;border:1px solid #cfcfcf;border-right:none"></div><div class="t" style="left:1300.00px;top:174.60px;font-family:'Liberation Mono', monospace;font-size:19px;font-weight:400;color:#128c91;transform:scaleX(0.9040);transform-origin:0 0;">White</div><div class="a" style="left:959px;top:211px;width:62px;height:819px;background:#f3f2f1"></div><div class="a" style="left:1021px;top:211px;width:1px;height:819px;background:#dcdcdc"></div><svg class="a" style="left:975px;top:230px;" width="28" height="22" viewBox="16 230 28 22"><path d="M19.8 236.6 H40.2 M19.8 241.6 H40.2 M19.8 246.6 H40.2" stroke="#222" stroke-width="1.2"/></svg><div class="a" style="left:959px;top:270.6px;width:60px;height:60px;background:#fff;border-radius:0 3px 3px 0"></div><div class="a" style="left:963.9px;top:285.7px;width:5px;height:30.3px;background:#742774;border-radius:2.5px"></div><svg class="a" style="left:977px;top:289px;" width="24" height="24" viewBox="18 289 24 24"><path d="M29.8 292.8 L39.2 297.4 L29.8 301.7 L20.6 297.4 Z" fill="#fff" stroke="#222" stroke-width="1.3" stroke-linejoin="round"/><path d="M20.9 300.8 H23.4 M36.4 300.8 H38.9" stroke="#222" stroke-width="1.4"/><path d="M23.6 302.3 L29.8 305.5 L36.2 302.3" fill="none" stroke="#222" stroke-width="1.3"/><path d="M23.2 302.8 L20.6 304.4 L29.8 308.8 L39.2 304.4 L36.6 302.8" fill="none" stroke="#222" stroke-width="1.3" stroke-linejoin="round"/></svg><svg class="a" style="left:975px;top:348px;" width="28" height="26" viewBox="16 348 28 26"><path d="M30 350.9 V371 M19.8 361 H40.2" stroke="#666" stroke-width="1.5"/></svg><svg class="a" style="left:979px;top:410px;" width="20" height="22" viewBox="20 410 20 22"><ellipse cx="29.2" cy="414.8" rx="6.2" ry="2.4" fill="none" stroke="#333" stroke-width="1.2"/><path d="M23 414.8 V426.6 A6.2 2.4 0 0 0 35.4 426.6 V414.8" fill="none" stroke="#333" stroke-width="1.2"/></svg><svg class="a" style="left:976px;top:468px;" width="26" height="24" viewBox="17 468 26 24"><path d="M34.6 476.6 V472.2 H20.2 V483.2 H29.6" fill="none" stroke="#444" stroke-width="1.3"/><path d="M23.3 473.5 V474.6 M23.3 476.4 V477.6 M23.3 479.4 V480.6 M31.6 473.5 V474.6 M31.6 476.4 V477.6" stroke="#666" stroke-width="1"/><path d="M31.7 487.6 V480.1 L39.5 478.1 V486.3" fill="none" stroke="#333" stroke-width="1.3"/><ellipse cx="30" cy="487.7" rx="1.9" ry="1.5" fill="none" stroke="#333" stroke-width="1.3"/><ellipse cx="37.6" cy="486.3" rx="1.9" ry="1.5" fill="none" stroke="#333" stroke-width="1.3"/></svg><svg class="a" style="left:976px;top:529px;" width="26" height="22" viewBox="17 529 26 22"><path d="M20.8 533 L21 532.6 H32.4 L39.8 540.4 L32.4 548 H21 L20.8 547.6 L26.2 540.2 Z" fill="none" stroke="#333" stroke-width="1.3" stroke-linejoin="round"/><path d="M32.2 532.9 L20.9 547.5 M36.3 537.2 L27.2 547.9" stroke="#333" stroke-width="1.3"/></svg><svg class="a" style="left:979px;top:588px;" width="20" height="26" viewBox="20 588 20 26"><path d="M25.2 595.6 A3 3 0 1 1 28.7 595.6 V609.4 A1.75 1.75 0 0 1 25.2 609.4 Z" fill="#ddd" stroke="#444" stroke-width="1.2"/><rect x="31.4" y="591.2" width="3.4" height="3.4" fill="#ddd" stroke="#444" stroke-width="1.1"/><path d="M33.1 594.6 V601.4 M30.2 601.4 H36" stroke="#444" stroke-width="1.2"/><path d="M31.3 601.6 V609.4 A1.8 1.8 0 0 0 34.9 609.4 V601.6" fill="#ddd" stroke="#444" stroke-width="1.2"/></svg><div class="a" style="left:1022px;top:211px;width:350px;height:819px;background:#f3f2f1"></div><div class="t" style="left:1042.26px;top:231.66px;font-family:'Liberation Sans', sans-serif;font-size:22.5px;font-weight:400;color:#252423;transform:scaleX(0.9709);transform-origin:0 0;-webkit-text-stroke:0.35px #252423;">Tree view</div><svg class="a" style="left:1329px;top:230px;" width="22" height="22" viewBox="370 230 22 22"><path d="M374.2 234.3 L388.6 247.7 M388.6 234.3 L374.2 247.7" stroke="#333" stroke-width="1.3"/></svg><div class="t" style="left:1041.86px;top:276.40px;font-family:'Liberation Sans', sans-serif;font-size:17px;font-weight:400;color:#252423;transform:scaleX(0.9892);transform-origin:0 0;-webkit-text-stroke:0.2px #252423;">Screens</div><div class="t" style="left:1125.92px;top:276.40px;font-family:'Liberation Sans', sans-serif;font-size:17px;font-weight:400;color:#3b3a39;transform:scaleX(1.0384);transform-origin:0 0;">Components</div><div class="a" style="left:1042px;top:297.6px;width:62px;height:2.6px;background:#742774"></div><div class="a" style="left:1022px;top:300px;width:350px;height:1px;background:#d8d8d8"></div><div class="a" style="left:1042px;top:310.8px;width:310px;height:38px;box-sizing:border-box;background:#fff;border:1px solid #8a8886;border-radius:2px"></div><svg class="a" style="left:1055px;top:318px;" width="26" height="24" viewBox="96 318 26 24"><circle cx="112" cy="326.6" r="6.4" fill="none" stroke="#8a2d8a" stroke-width="1.25"/><path d="M107.4 331.1 L99.3 339.5" stroke="#8a2d8a" stroke-width="1.3"/></svg><div class="t" style="left:1087.09px;top:323.24px;font-family:'Liberation Sans', sans-serif;font-size:15px;font-weight:400;color:#605e5c;transform:scaleX(0.9464);transform-origin:0 0;">Search</div><svg class="a" style="left:1044px;top:356px;" width="24" height="26" viewBox="85 356 24 26"><path d="M97.3 358.8 V379 M87.4 369 H107.2" stroke="#8a2d8a" stroke-width="1.4"/></svg><div class="t" style="left:1075.93px;top:361.28px;font-family:'Liberation Sans', sans-serif;font-size:15.5px;font-weight:400;color:#323130;transform:scaleX(0.9470);transform-origin:0 0;">New screen</div><svg class="a" style="left:1160.82px;top:362.15999999999997px;" width="19.360000000000014" height="12.680000000000007" viewBox="201.82 362.15999999999997 19.360000000000014 12.680000000000007"><path d="M204.82 365.16 L211.50 371.84 L218.18 365.16" fill="none" stroke="#444" stroke-width="1.2"/></svg><div class="a" style="left:1022px;top:389px;width:350px;height:1px;background:#dcdcdc"></div><svg class="a" style="left:1047px;top:398px;" width="24" height="24" viewBox="88 398 24 24"><path d="M91.2 400.7 H109.4 V409.7 H91.2 Z M91.2 418.6 V400.7 M91.2 418.6 H100.3 V400.7" fill="none" stroke="#333" stroke-width="1.2"/></svg><div class="t" style="left:1079.40px;top:402.98px;font-family:'Liberation Sans', sans-serif;font-size:15.5px;font-weight:400;color:#323130;transform:scaleX(0.9752);transform-origin:0 0;">App</div><div class="a" style="left:1022px;top:429px;width:350px;height:40.5px;background:#dcdcdc"></div><div class="a" style="left:1050px;top:442.6px;width:20px;height:14.4px;box-sizing:border-box;background:#fff;border:1.3px solid #444;border-radius:1.5px"></div><div class="t" style="left:1078.70px;top:443.28px;font-family:'Liberation Sans', sans-serif;font-size:15.5px;font-weight:400;color:#323130;transform:scaleX(0.9029);transform-origin:0 0;">Screen1</div><svg class="a" style="left:1319px;top:444px;" width="26" height="10" viewBox="360 444 26 10"><circle cx="364.6" cy="449.2" r="1.2" fill="#222"/><circle cx="372.7" cy="449.2" r="1.2" fill="#222"/><circle cx="380.8" cy="449.2" r="1.2" fill="#222"/></svg><div class="a" style="left:1372px;top:211px;width:1px;height:819px;background:#dadada"></div><div class="a" style="left:1373px;top:211px;width:545px;height:769px;background:#dfdfdf"></div><div class="a" style="left:1373px;top:211px;width:20px;height:769px;background:linear-gradient(90deg,#d8d8d8,#dfdfdf)"></div><div class="a" style="left:1500px;top:301px;width:320px;height:568px;background:#fff"></div><div class="t" style="left:1534.80px;top:580.09px;font-family:'Liberation Sans', sans-serif;font-size:12px;font-weight:400;color:#8b2f8b;transform:scaleX(0.9132);transform-origin:0 0;"><span style="color:#a25aa2">Add an item from the Insert pane</span> <span style="color:#555">or</span> <span style="color:#a25aa2">connect to data</span></div><div class="a" style="left:1373px;top:979px;width:545px;height:1px;background:#d4d4d4"></div><div class="a" style="left:1373px;top:980px;width:545px;height:50px;background:#f0f0f0"></div><div class="a" style="left:1388.8px;top:996.6px;width:19.6px;height:14.4px;box-sizing:border-box;background:#fff;border:1.3px solid #444;border-radius:1.5px"></div><div class="t" style="left:1414.60px;top:997.02px;font-family:'Liberation Sans', sans-serif;font-size:16px;font-weight:400;color:#333;transform:scaleX(0.8764);transform-origin:0 0;">Screen1</div><div class="a" style="left:1569px;top:1003px;width:14.4px;height:1.5px;background:#bbb"></div><div class="a" style="left:1602.7px;top:1003px;width:200.4px;height:3px;background:#4a4a4a"></div><div class="a" style="left:1641px;top:995px;width:4px;height:16px;background:#4a4a4a;box-shadow:0 0 0 1px #f4f4f4"></div><div class="a" style="left:1681px;top:999px;width:1.6px;height:10px;background:#4a4a4a"></div><svg class="a" style="left:1816px;top:994px;" width="20" height="20" viewBox="857 994 20 20"><path d="M866.9 997 V1011 M859.9 1003.9 H874.1" stroke="#808080" stroke-width="1.6"/></svg><div class="t" style="left:1860.22px;top:997.18px;font-family:'Liberation Sans', sans-serif;font-size:15.5px;font-weight:400;color:#555;transform:scaleX(0.8886);transform-origin:0 0;">40</div><div class="t" style="left:1885.00px;top:997.18px;font-family:'Liberation Sans', sans-serif;font-size:15.5px;font-weight:400;color:#555;transform:scaleX(0.8497);transform-origin:0 0;">%</div><div class="a" style="left:959px;top:1028px;width:953px;height:2px;background:#f0f0f0"></div></div><div class="a" style="left:959px;top:60px;width:1px;height:970px;background:#8c8c8c"></div><div class="a" style="left:959px;top:0px;width:1px;height:60px;background:#6a5a6a"></div><div class="a" style="left:960px;top:0px;width:8px;height:1030px;background:linear-gradient(90deg,rgba(0,0,0,0.12),rgba(0,0,0,0))"></div><div class="a" style="left:1911px;top:0px;width:1px;height:1030px;background:#3c3c3c"></div><svg class="a" style="left:938px;top:520px;" width="22" height="30" viewBox="938 520 22 30"><path d="M941.5 523.5 V543.5 L946 539.2 L949.4 546.6 L952.4 545.2 L949.2 538 H955.5 Z" fill="#fff" stroke="#000" stroke-width="1.1" stroke-linejoin="miter"/></svg></body></html>
